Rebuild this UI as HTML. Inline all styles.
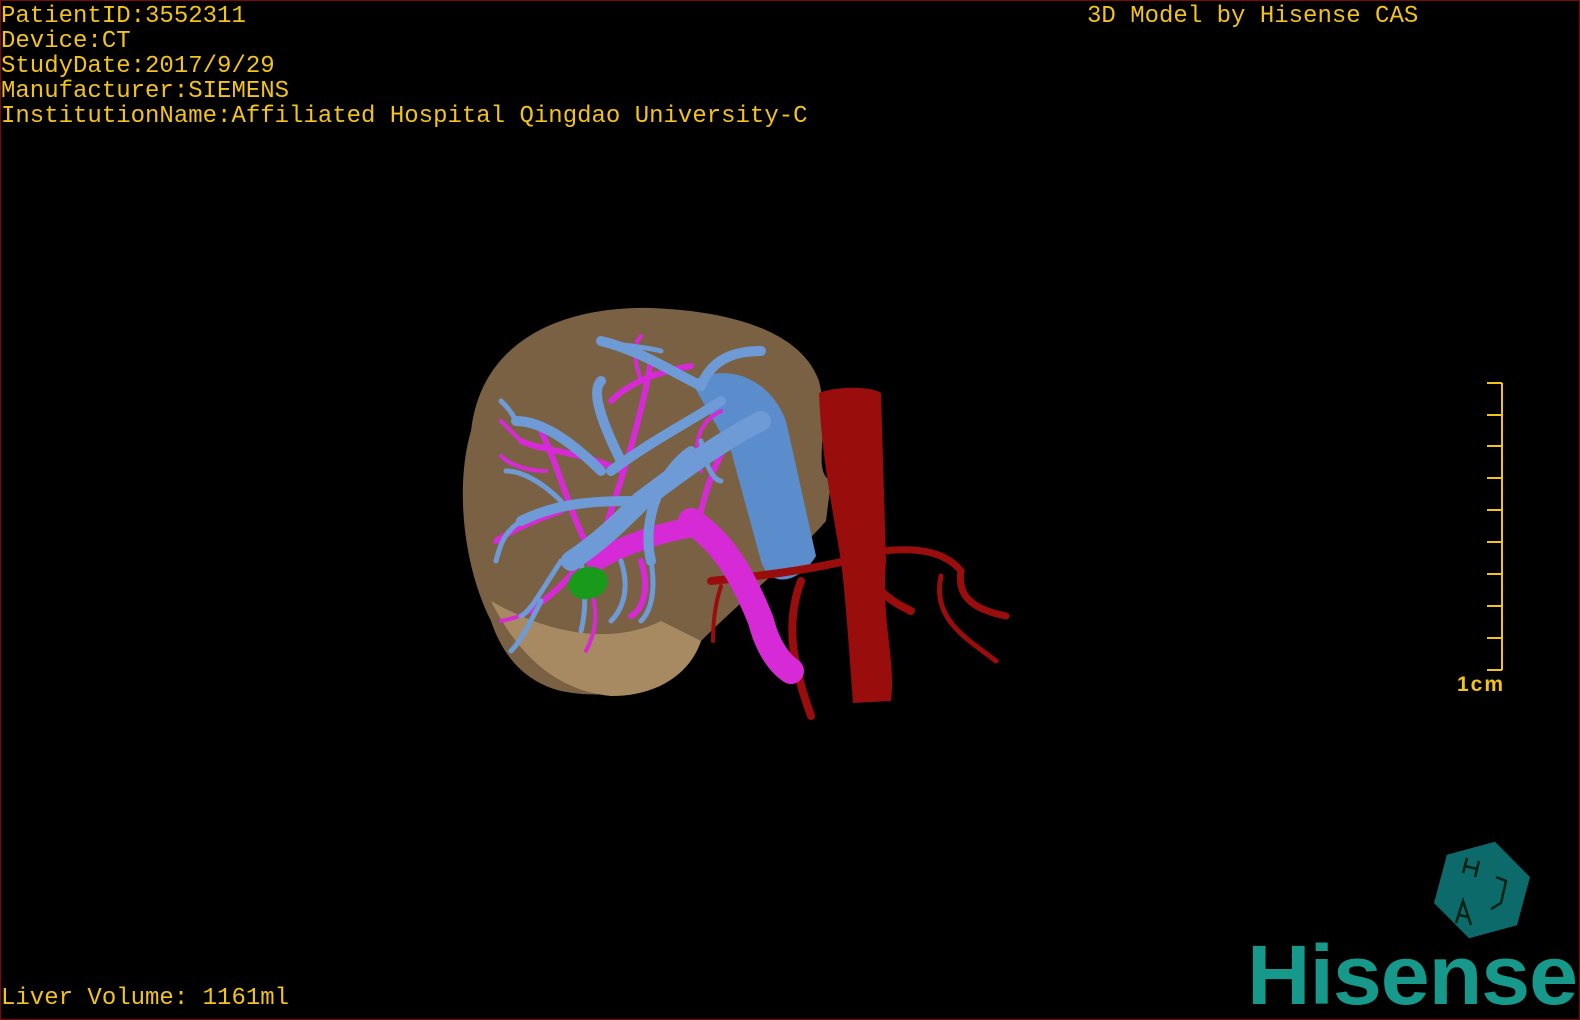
<!DOCTYPE html>
<html><head><meta charset="utf-8"><style>
html,body{margin:0;padding:0;background:#000;}
#f{position:relative;width:1578px;height:1018px;border:1px solid #7a0a0a;overflow:hidden;background:#000;}
.t{position:absolute;font-family:"Liberation Mono",monospace;font-size:24px;color:#f2c31a;white-space:pre;line-height:25px;}
</style></head><body><div id="f">
<div class="t" style="left:0;top:3px">PatientID:3552311
Device:CT
StudyDate:2017/9/29
Manufacturer:SIEMENS
InstitutionName:Affiliated Hospital Qingdao University-C</div>
<div class="t" style="left:1086px;top:3px">3D Model by Hisense CAS</div>
<div class="t" style="left:0;top:985px">Liver Volume: 1161ml</div>
<svg width="1580" height="1020" style="position:absolute;left:0;top:0">
<!-- liver -->
<path d="M470,430 C480,340 560,305 650,307 C730,310 800,330 818,380 C830,430 810,470 830,480 L825,520 C790,560 740,600 700,640 C680,690 610,700 560,690 C520,680 500,650 490,620 C460,560 455,480 470,430 Z" fill="#86694a" opacity="0.92"/>
<path d="M490,600 C520,660 560,690 610,695 C660,695 690,670 700,640 L660,620 C620,640 560,640 490,600Z" fill="#a88a62"/>
<!-- IVC blue -->
<path d="M690,380 C730,360 770,380 785,420 L815,555 C800,580 770,590 760,560 L730,450 Z" fill="#5b8ccc"/>
<!-- aorta -->
<path d="M818,392 C835,385 870,385 880,392 L885,560 C880,620 895,660 890,700 L852,702 C848,650 845,600 840,560 C830,500 820,450 818,392Z" fill="#9a0d0d"/>
<g fill="none" stroke-linecap="round">
<path d="M845,560 C800,570 760,575 710,580" stroke="#9a0d0d" stroke-width="8"/>
<path d="M850,555 C900,545 940,545 960,570 C955,600 980,610 1005,615" stroke="#9a0d0d" stroke-width="7"/>
<path d="M940,575 C930,620 970,640 995,660" stroke="#9a0d0d" stroke-width="5"/>
<path d="M800,580 C785,620 790,660 810,715" stroke="#9a0d0d" stroke-width="8"/>
<path d="M880,590 C890,600 900,605 910,610" stroke="#9a0d0d" stroke-width="8"/>
<path d="M720,585 C715,600 712,620 712,640" stroke="#9a0d0d" stroke-width="4"/>
<path d="M690,520 C720,540 740,570 760,620 C765,640 775,660 790,670" stroke="#d62ad6" stroke-width="26"/>
<path d="M700,525 C660,530 620,545 595,560" stroke="#d62ad6" stroke-width="20"/>
<path d="M595,560 C570,520 560,470 540,430 M600,540 C620,480 640,420 650,360 M620,470 C580,450 540,450 520,440 M580,560 C560,590 540,600 530,610 M640,560 C650,590 640,610 630,615 M610,400 C630,380 660,370 690,365 M560,510 C530,520 510,530 495,540 M700,510 C710,470 720,450 735,430" stroke="#d62ad6" stroke-width="6"/>
<path d="M590,590 C600,620 590,640 585,650 M545,470 C520,470 505,460 500,455 M640,380 C630,350 635,340 640,335 M700,470 C690,440 700,420 720,410 M520,440 C510,430 505,425 500,420 M530,610 C520,615 510,618 500,620" stroke="#d62ad6" stroke-width="4"/>
<path d="M760,420 C720,440 680,470 640,500 C620,520 600,540 570,560" stroke="#6e9ad6" stroke-width="20"/>
<path d="M720,400 C690,420 650,440 610,470 M690,450 C660,470 640,520 650,560 M640,500 C600,500 560,500 520,520 M600,470 C570,440 540,420 515,420 M620,460 C600,420 590,390 600,380 M700,385 C670,370 640,350 600,340 M700,385 C710,360 730,350 760,350" stroke="#6e9ad6" stroke-width="10"/>
<path d="M520,520 C505,530 500,540 495,560 M560,560 C540,590 530,610 520,615 M650,560 C655,590 650,610 640,620 M580,560 C585,590 585,610 580,630 M515,420 C510,410 505,405 500,400 M620,560 C630,590 620,610 610,620 M560,500 C540,480 520,470 505,470 M700,440 C705,470 715,480 720,480 M600,340 C620,345 640,345 660,350 M540,600 C530,620 520,640 510,650" stroke="#6e9ad6" stroke-width="5"/>
</g>
<ellipse cx="587" cy="582" rx="20" ry="16" fill="#1a9a1a" transform="rotate(-15 587 582)"/>
<g stroke="#f2c31a" stroke-width="2" fill="none">
<path d="M1501,382 V669"/>
<path d="M1486,382H1501M1486,414H1501M1486,445H1501M1486,477H1501M1486,509H1501M1486,541H1501M1486,573H1501M1486,605H1501M1486,637H1501M1486,669H1501"/>
</g>
<text x="1456" y="690" font-family="Liberation Sans,sans-serif" font-size="21" font-weight="bold" fill="#f2c31a" letter-spacing="2">1cm</text>
<g transform="translate(1481,889) rotate(15)">
<polygon points="0,-50 43,-25 43,25 0,50 -43,25 -43,-25" fill="#0c6a6a"/>
</g>
<g stroke="#021" stroke-width="2.5" fill="none">
<path d="M1466,857 L1462,872 M1478,860 L1474,876 M1464,865 L1476,868"/>
<path d="M1495,876 L1505,880 L1500,902 L1490,908"/>
<path d="M1455,922 L1462,900 L1470,924 M1458,914 L1468,916"/>
</g>
<text x="1246" y="1003" font-family="Liberation Sans,sans-serif" font-size="84" font-weight="bold" fill="#16998a" letter-spacing="-1" textLength="330" lengthAdjust="spacingAndGlyphs">Hisense</text>
</svg>
</div></body></html>
